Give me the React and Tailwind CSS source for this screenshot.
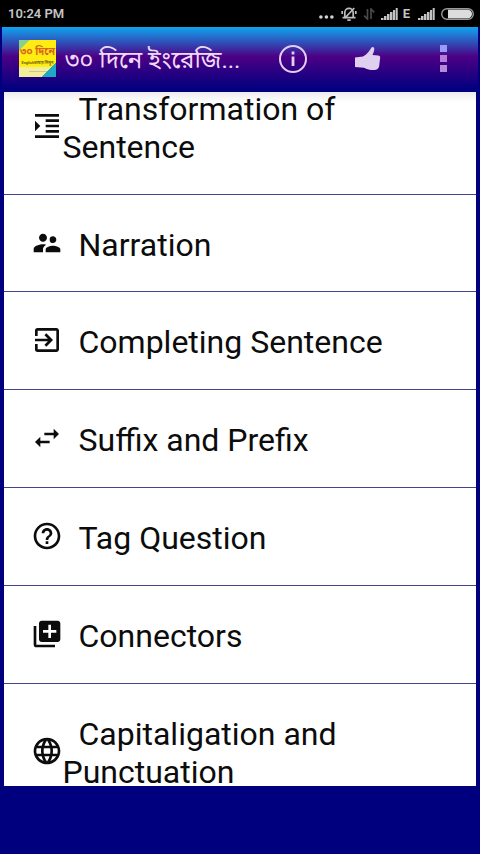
import {
  MdExitToApp,
  MdFormatIndentIncrease,
  MdHelpOutline,
  MdLanguage,
  MdLibraryAdd,
  MdSupervisorAccount,
  MdSwapHoriz,
} from "react-icons/md";

const topics = [
  { label: "Transformation of Sentence", icon: MdFormatIndentIncrease },
  { label: "Narration", icon: MdSupervisorAccount },
  { label: "Completing Sentence", icon: MdExitToApp },
  { label: "Suffix and Prefix", icon: MdSwapHoriz },
  { label: "Tag Question", icon: MdHelpOutline },
  { label: "Connectors", icon: MdLibraryAdd },
  { label: "Capitaligation and Punctuation", icon: MdLanguage },
];

function Signal() {
  return (
    <svg width="17" height="12" viewBox="0 0 17 12" fill="#c4c4c4">
      <rect x="0" y="10" width="2.5" height="2" />
      <rect x="3" y="8" width="2.5" height="4" />
      <rect x="6" y="6" width="2.5" height="6" />
      <rect x="9" y="4" width="2.5" height="8" />
      <rect x="12" y="2" width="2.2" height="10" />
      <rect x="14.7" y="0" width="2" height="12" />
    </svg>
  );
}

function StatusBar() {
  return (
    <div className="flex h-[27px] items-center justify-between bg-black pl-2 pr-[6px] text-[#c4c4c4]">
      <span className="text-[13px] font-semibold leading-none">10:24 PM</span>
      <div className="flex items-center">
        <svg className="mr-[7px] mt-[6px]" width="15" height="4" viewBox="0 0 15 4" fill="#d4d4d4">
          <circle cx="1.9" cy="2" r="1.8" />
          <circle cx="7.4" cy="2" r="1.8" />
          <circle cx="12.9" cy="2" r="1.8" />
        </svg>
        {/* muted bell */}
        <svg
          className="mr-[6px]"
          width="16"
          height="16"
          viewBox="0 0 16 16"
          fill="none"
          stroke="#bdbdbd"
          strokeWidth="1.7"
        >
          <path d="M3.8 11V6.5a4.2 4.2 0 0 1 8.4 0V11M1.5 11.7h13M6.3 14.2h3.4M3.5 12.5 13.3 2M1.2 5v3M14.8 5v3" />
        </svg>
        <svg
          className="mr-[6px]"
          width="12"
          height="12"
          viewBox="0 0 12 12"
          fill="none"
          stroke="#4a4a4a"
          strokeWidth="1.7"
        >
          <path d="M4.5 1v10L1.2 7.7M8 11V1l3.2 3.3" />
        </svg>
        <Signal />
        <span className="ml-[5px] mr-[8px] text-[13px] font-bold leading-none">E</span>
        <Signal />
        <svg className="ml-[6px]" width="33" height="12" viewBox="0 0 33 12">
          <rect x="0.7" y="0.7" width="31.6" height="10.6" rx="5.3" fill="none" stroke="#999" strokeWidth="1.4" />
          <path d="M7 1.8h19.8a4.2 4.2 0 0 1 0 8.4H7z" fill="#ddd" />
        </svg>
      </div>
    </div>
  );
}

function AppLogo() {
  return (
    <div className="flex h-[37px] w-[37px] shrink-0 flex-col items-center overflow-hidden bg-[linear-gradient(135deg,#8bd08a_14%,transparent_15%),linear-gradient(315deg,#20a9c4_19%,transparent_20%),linear-gradient(to_bottom,#ffed12_70%,#f3ee9b_76%)] pt-[5px]">
      <span className="whitespace-nowrap text-[10.5px] font-bold leading-[14px] text-[#d9671c]">
        ৩০ দিনে
      </span>
      <span className="whitespace-nowrap text-[3.8px] font-bold leading-[8px] text-[#6f5f10]">
        Englishভাষায় শিখুন
      </span>
      <span className="mt-[4px] h-px w-[18px] bg-[#d4c490]" />
    </div>
  );
}

function Toolbar() {
  return (
    <div className="flex h-[65px] items-center border-x-2 border-b-2 border-[#00007f] bg-[linear-gradient(to_bottom,#10a5f0_0%,#4c0085_47%,#00007f_100%)] pl-[17px] pr-[31px]">
      <AppLogo />
      <h1 className="ml-[9px] mt-[3px] w-[178px] whitespace-nowrap text-[24px] leading-[36px] text-[#eed9f8]">
        ৩০ দিনে ইংরেজি...
      </h1>
      <svg className="ml-[35px]" width="30" height="30" viewBox="0 0 30 30" fill="none" stroke="#e2cdf3">
        <circle cx="15" cy="15" r="13" strokeWidth="2" />
        <path d="M15 12.5V22" strokeWidth="2.8" />
        <path d="M15 7.5v3" strokeWidth="2.8" />
      </svg>
      <svg className="ml-[46px]" width="27" height="25" viewBox="0 0 27 25" fill="#ded0ee">
        <path d="M1 11.5l8-1C13 8.5 15.5 4.5 17.5 1.5c.8-1.2 2.7-.5 2.8 1 0 2.5-1 4.5-1.8 6.5l6 .5c1.8.3 1.9 2 1.5 3.5L25.2 20c-.4 2-1.7 3.7-4.2 4-4 .3-8-.7-11-2.3L1 21z" />
      </svg>
      <div className="ml-auto flex flex-col gap-[3px]">
        <span className="h-[7px] w-[7px] bg-[#9b9af5]" />
        <span className="h-[7px] w-[7px] bg-[#b47dd6]" />
        <span className="h-[7px] w-[7px] bg-[#b389d8]" />
      </div>
    </div>
  );
}

function TopicRow({ label, icon: Icon }) {
  return (
    <li className="flex items-center border-b border-[#45458f] pb-[27.8px] pl-[26.5px] pt-[31px]">
      <Icon className="relative -top-[2px] h-8 w-8 shrink-0" />
      <span className="w-[330px] indent-4 text-[32px] leading-[38px]">{label}</span>
    </li>
  );
}

export default function App() {
  return (
    <div className="flex h-[854px] w-[480px] flex-col overflow-hidden bg-[#00007f] font-[Roboto,'Noto_Sans_Bengali',sans-serif]">
      <StatusBar />
      <Toolbar />
      <div className="mx-1 h-[694px] overflow-hidden bg-[linear-gradient(to_bottom,#ececf0,#fff_10px)] text-[#0c0c0c]">
        {/* list is scrolled part way into the first row */}
        <ul className="-mt-[33.2px]">
          {topics.map((topic) => (
            <TopicRow key={topic.label} {...topic} />
          ))}
        </ul>
      </div>
    </div>
  );
}
